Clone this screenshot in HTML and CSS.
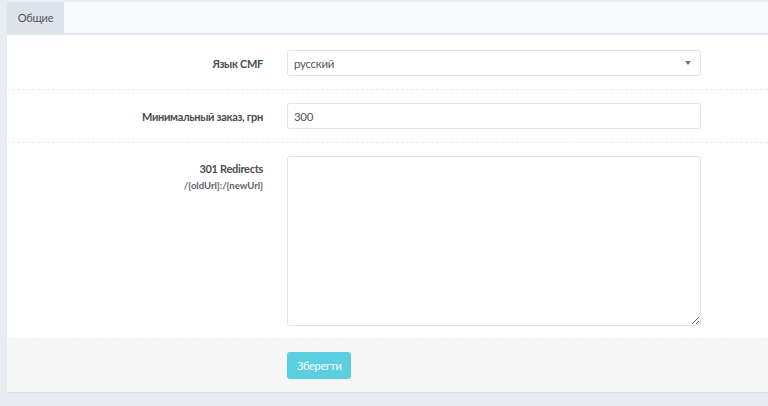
FILE: index.html
```html
<!DOCTYPE html>
<html lang="ru">
<head>
  <meta charset="UTF-8">
  <title>Настройки</title>
  <link rel="stylesheet" href="styles.css">
</head>
<body>
  <div class="panel">
    <div class="tabs">
      <div class="tab active">Общие</div>
    </div>

    <form class="form">
      <div class="row">
        <label class="label">Язык CMF</label>
        <div class="field">
          <div class="select">
            <span>русский</span>
            <span class="caret"></span>
          </div>
        </div>
      </div>

      <div class="row">
        <label class="label">Минимальный заказ, грн</label>
        <div class="field">
          <input class="input" type="text" value="300">
        </div>
      </div>

      <div class="row row-top">
        <label class="label">
          301 Redirects
          <small>/{oldUrl}:/{newUrl}</small>
        </label>
        <div class="field">
          <textarea class="textarea"></textarea>
        </div>
      </div>

      <div class="actions">
        <div class="label"></div>
        <div class="field">
          <button type="button" class="btn">Зберегти</button>
        </div>
      </div>
    </form>
  </div>
</body>
</html>
```

FILE: styles.css
```css
html, body {
  margin: 0;
  padding: 0;
  height: 100%;
  overflow: hidden;
}

body {
  background-color: #e9edf2;
  font-family: Lato, "DejaVu Sans Condensed", sans-serif;
  font-size: 11px;
  letter-spacing: -0.3px;
  color: #555;
  padding: 2px 0 0 7px;
  box-sizing: border-box;
}

.panel {
  background-color: white;
  height: 390px;
  box-shadow: 0 1px 1px #dde2e9;
}

.tabs {
  display: flex;
  height: 31px;
  background-color: #f9fafc;
  border-bottom: 2px solid #e0e5ec;
}

.tab {
  width: 57px;
  display: flex;
  align-items: center;
  justify-content: center;
  color: #555;
}

.tab.active {
  background-color: #dde3ea;
}

.form {
  padding-top: 2px;
}

.row {
  display: flex;
  align-items: center;
  padding: 13px 0;
  border-bottom: 1px dashed #eeeeee;
}

.row-top {
  align-items: flex-start;
  padding: 13px 0 12px;
  border-bottom: none;
}

.label {
  width: 256px;
  margin-right: 24px;
  flex-shrink: 0;
  text-align: right;
  font-weight: bold;
  color: #4d4d4d;
}

.row-top .label {
  padding-top: 5px;
  line-height: 16px;
}

.label small {
  display: block;
  font-size: 9.5px;
  letter-spacing: 0;
  color: #5a6470;
  margin-top: 1px;
}

.field {
  width: 414px;
}

.select,
.input {
  height: 26px;
  border: 1px solid #e3e4ec;
  border-radius: 3px;
  box-sizing: border-box;
  padding: 0 6px;
  font-family: inherit;
  font-size: 11.5px;
  letter-spacing: inherit;
  color: #555;
  width: 100%;
  background-color: white;
}

.select {
  display: flex;
  align-items: center;
  justify-content: space-between;
  padding-right: 9px;
}

.caret {
  width: 0;
  height: 0;
  border-left: 3px solid transparent;
  border-right: 3px solid transparent;
  border-top: 4px solid #777;
}

.input {
  outline: none;
}

.textarea {
  display: block;
  width: 100%;
  height: 170px;
  border: 1px solid #e3e4ec;
  border-radius: 3px;
  box-sizing: border-box;
  resize: vertical;
  font-family: inherit;
  outline: none;
}

.actions {
  display: flex;
  align-items: center;
  background-color: #f7f7f7;
  border-top: 1px dashed #eeeeee;
  padding: 13px 0;
}

.btn {
  background-color: #5bcfdf;
  color: white;
  border: none;
  border-radius: 3px;
  height: 27px;
  padding: 0 10px;
  font-family: inherit;
  font-size: 11px;
  letter-spacing: inherit;
  cursor: pointer;
}
```
